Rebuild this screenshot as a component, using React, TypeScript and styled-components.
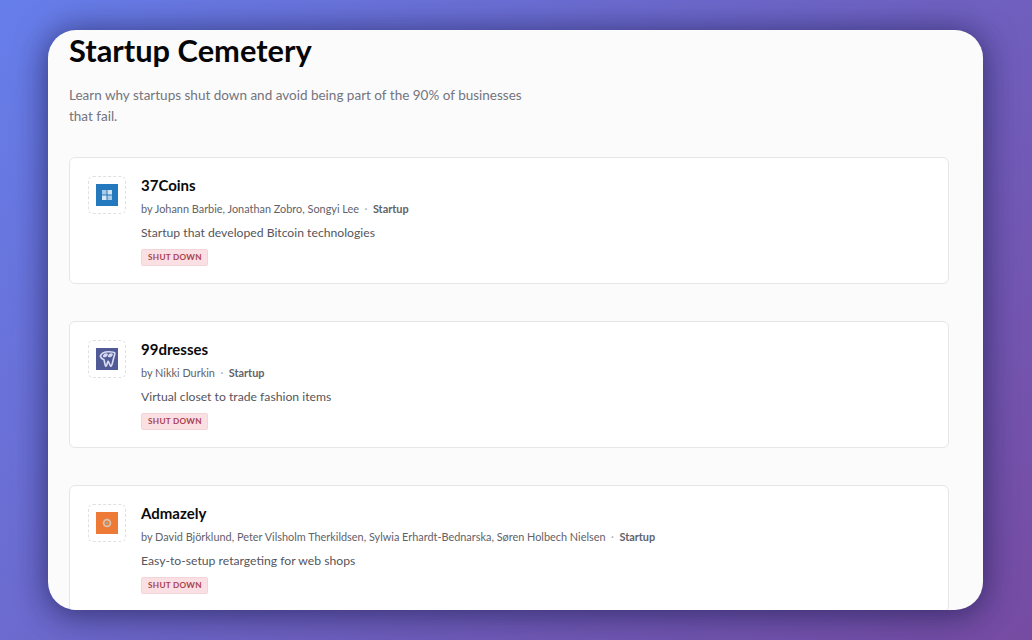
import styled, { createGlobalStyle } from "styled-components";

const GlobalStyle = createGlobalStyle`
  html, body {
    margin: 0;
    padding: 0;
  }
  body {
    font-family: Lato, "Open Sans", sans-serif;
  }
`;

const startups = [
  {
    name: "37Coins",
    founders: "Johann Barbie, Jonathan Zobro, Songyi Lee",
    blurb: "Startup that developed Bitcoin technologies",
    color: "#2478bd",
    logo: "coins",
  },
  {
    name: "99dresses",
    founders: "Nikki Durkin",
    blurb: "Virtual closet to trade fashion items",
    color: "#505a96",
    logo: "dress",
  },
  {
    name: "Admazely",
    founders: "David Björklund, Peter Vilsholm Therkildsen, Sylwia Erhardt-Bednarska, Søren Holbech Nielsen",
    blurb: "Easy-to-setup retargeting for web shops",
    color: "#ee7a38",
    logo: "target",
  },
];

function Logo({ kind }: { kind: string }) {
  if (kind === "coins") {
    return (
      <svg width="12" height="12" viewBox="0 0 12 12">
        <rect x="1" y="1" width="4.5" height="4.5" fill="#a9cbe8" />
        <rect x="6.5" y="1" width="4.5" height="4.5" fill="#cfe2f3" />
        <rect x="1" y="6.5" width="4.5" height="4.5" fill="#dbe9f6" />
        <rect x="6.5" y="6.5" width="4.5" height="4.5" fill="#a9cbe8" />
      </svg>
    );
  }
  if (kind === "dress") {
    return (
      <svg width="20" height="20" viewBox="0 0 18 18" fill="none" stroke="#d9dcf0" strokeWidth="1.5" strokeLinecap="round" strokeLinejoin="round">
        <path d="M3 6.5C4 3.5 8 2.5 10.5 2.5C13 2.5 15.5 2.5 16 3.5C16 6 15 8 14.5 10C14 12.5 13.5 15 12.5 15.5C11.5 15 11 12 10 11C9.2 12 9 15 8 15.5C7 15 7 11.5 6.2 9.5C5 9 3.5 8.5 3 6.5Z" />
        <path d="M6 6.5C6.5 5 8 4.5 9 4.8C8.8 6 7.5 7 6 6.5Z" />
        <path d="M10.5 6.5C11 5 12.5 4.5 13.5 4.8C13.3 6 12 7 10.5 6.5Z" />
      </svg>
    );
  }
  return (
    <svg width="12" height="12" viewBox="0 0 12 12" fill="none">
      <circle cx="6" cy="6" r="3.4" stroke="#d8c4ae" strokeWidth="1.8" />
      <circle cx="6" cy="6" r="1.3" fill="#a9a79c" />
    </svg>
  );
}

export default function App() {
  return (
    <Page>
      <GlobalStyle />
      <Frame>
        <Title>Startup Cemetery</Title>
        <Intro>
          Learn why startups shut down and avoid being part of the 90% of businesses that fail.
        </Intro>
        <List>
          {startups.map((s) => (
            <Card key={s.name}>
              <LogoBox>
                <LogoTile $color={s.color}>
                  <Logo kind={s.logo} />
                </LogoTile>
              </LogoBox>
              <Body>
                <Name>{s.name}</Name>
                <Meta>
                  by {s.founders}
                  <Dot>·</Dot>
                  <Kind>Startup</Kind>
                </Meta>
                <Blurb>{s.blurb}</Blurb>
                <Badge>SHUT DOWN</Badge>
              </Body>
            </Card>
          ))}
        </List>
      </Frame>
    </Page>
  );
}

const Page = styled.div`
  width: 1032px;
  height: 640px;
  box-sizing: border-box;
  padding: 30px 49px 30px 48px;
  overflow: hidden;
  background: linear-gradient(135deg, #667eea 0%, #764ba2 100%);
`;

const Frame = styled.div`
  height: 580px;
  box-sizing: border-box;
  padding: 0 34px 0 21px;
  overflow: hidden;
  border-radius: 28px;
  background: #fbfbfc;
  box-shadow: 0 0 32px rgba(30, 30, 80, 0.55), 0 10px 30px rgba(30, 30, 80, 0.3);
`;

const Title = styled.h1`
  margin: 0;
  font-size: 30.8px;
  line-height: 41px;
  font-weight: 700;
  color: #060608;
`;

const Intro = styled.p`
  margin: 14px 0 0;
  width: 470px;
  font-size: 13.5px;
  line-height: 21px;
  color: #74747c;
`;

const List = styled.div`
  display: flex;
  flex-direction: column;
  gap: 37px;
  margin-top: 30px;
`;

const Card = styled.article`
  display: flex;
  flex-shrink: 0;
  gap: 15px;
  height: 127px;
  box-sizing: border-box;
  padding: 18px 18px;
  border: 1px solid #e6e6ea;
  border-radius: 6px;
  background: #ffffff;
`;

const LogoBox = styled.div`
  display: flex;
  align-items: center;
  justify-content: center;
  flex-shrink: 0;
  width: 38px;
  height: 38px;
  box-sizing: border-box;
  border: 1px dashed #e0e0e4;
  border-radius: 5px;
`;

const LogoTile = styled.div<{ $color: string }>`
  display: flex;
  align-items: center;
  justify-content: center;
  width: 22px;
  height: 22px;
  background: ${(p) => p.$color};
`;

const Body = styled.div`
  display: flex;
  flex-direction: column;
  align-items: flex-start;
  padding-top: 1px;
`;

const Name = styled.h2`
  margin: 0;
  font-size: 15px;
  line-height: 16px;
  font-weight: 700;
  color: #0a0a0c;
`;

const Meta = styled.div`
  margin-top: 8px;
  font-size: 10.9px;
  line-height: 16px;
  color: #62626a;
`;

const Dot = styled.span`
  margin: 0 5.5px;
  color: #a8a8ae;
`;

const Kind = styled.span`
  font-weight: 700;
`;

const Blurb = styled.p`
  margin: 7px 0 0;
  font-size: 12.2px;
  line-height: 17px;
  color: #55555c;
`;

const Badge = styled.span`
  margin-top: 8px;
  padding: 0 5px 0 6px;
  font-size: 8.2px;
  line-height: 15px;
  font-weight: 700;
  letter-spacing: 0.3px;
  color: #a9404f;
  background: #fae0e3;
  border: 1px solid #f3d5d9;
  border-radius: 2px;
`;
